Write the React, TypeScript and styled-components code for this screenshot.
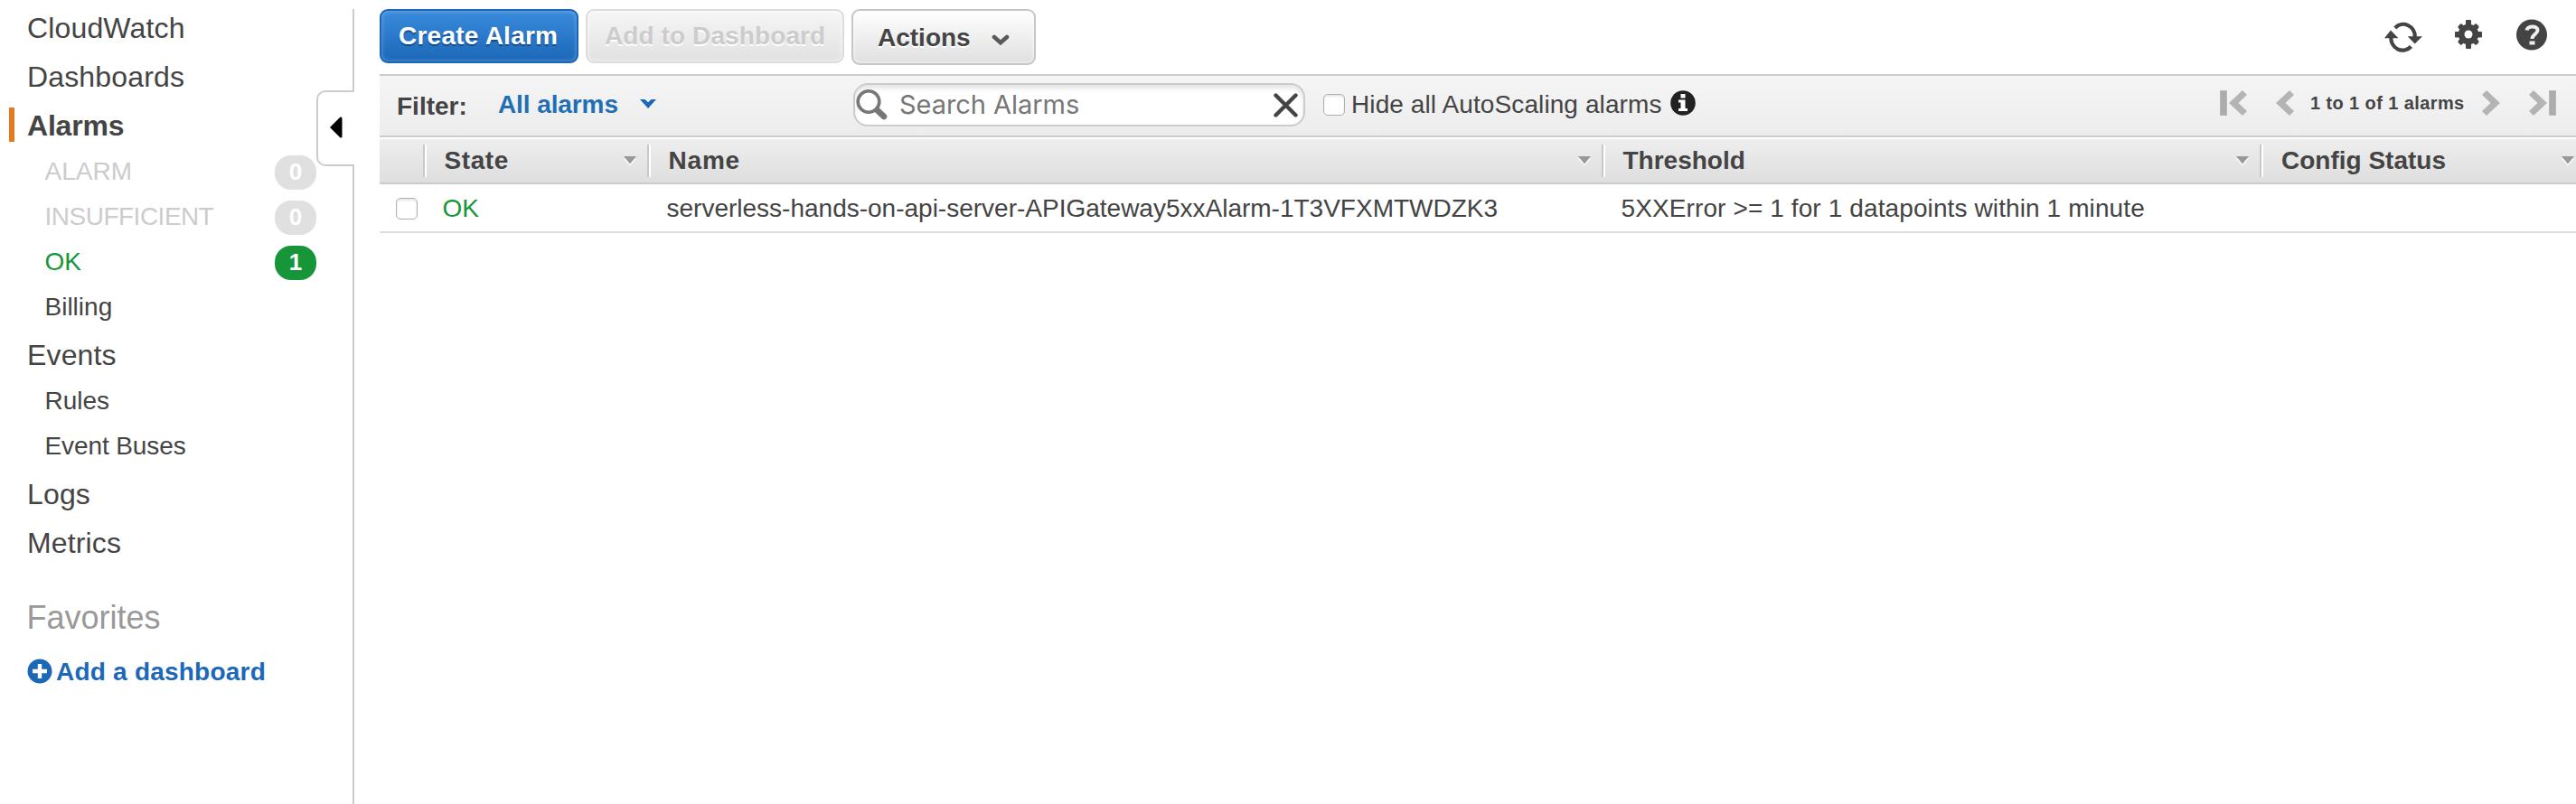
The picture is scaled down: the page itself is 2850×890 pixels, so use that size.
import React from "react";
import styled, { createGlobalStyle, css } from "styled-components";

const GlobalStyle = createGlobalStyle`
  * { box-sizing: border-box; }
  html, body { margin: 0; padding: 0; background: #fff; overflow: hidden; }
  body { font-family: "Liberation Sans", Arial, sans-serif; font-size: 28px; color: #444; }
`;

const Page = styled.div`
  display: flex;
  width: 2850px;
  height: 890px;
  overflow: hidden;
`;

const Sidebar = styled.nav`
  position: relative;
  flex: none;
  width: 392px;
  padding-top: 4px;
`;

const SidebarEdge = styled.div`
  position: absolute;
  top: 10px;
  right: 0;
  bottom: 0;
  width: 2px;
  background: #ccc;
`;

const CollapseTab = styled.button`
  position: absolute;
  top: 100px;
  right: 0;
  width: 42px;
  height: 84px;
  padding: 0 0 3px 13px;
  display: flex;
  align-items: center;
  background: #fff;
  border: 2px solid #ccc;
  border-right: none;
  border-radius: 10px 0 0 10px;
`;

const NavItem = styled.a<{ $active?: boolean }>`
  display: flex;
  align-items: center;
  height: 54px;
  padding-left: 30px;
  font-size: 32px;
  line-height: 54px;
  letter-spacing: 0.15px;
  ${(p) =>
    p.$active &&
    css`
      padding-left: 0;
      font-weight: bold;
      letter-spacing: -0.2px;
      &::before {
        content: "";
        width: 6px;
        height: 38px;
        margin: 0 14px 2px 10px;
        background: #e07b22;
      }
    `}
`;

const SubItem = styled.a<{ $color?: string; $spacing?: number }>`
  display: flex;
  align-items: center;
  justify-content: space-between;
  height: 50px;
  padding: 0 42px 0 49.5px;
  color: ${(p) => p.$color ?? "#444"};
  letter-spacing: ${(p) => p.$spacing ?? 0}px;
`;

const SubLabel = styled.span`
  line-height: 46px;
  padding-bottom: 3px;
`;

const Badge = styled.span<{ $color: string }>`
  width: 46px;
  height: 38px;
  border-radius: 18px;
  background: ${(p) => p.$color};
  color: #fff;
  font-size: 26px;
  font-weight: bold;
  line-height: 37px;
  text-align: center;
  letter-spacing: 0;
`;

const Favorites = styled.h2`
  margin: 35px 0 0 29.5px;
  font-size: 36px;
  font-weight: normal;
  line-height: 42px;
  color: #999;
`;

const AddDashboard = styled.a`
  display: flex;
  align-items: center;
  gap: 4px;
  margin: 22px 0 0 30px;
  height: 34px;
  font-weight: bold;
  line-height: 34px;
  letter-spacing: 0.22px;
  color: #1c68b8;
  svg { margin-bottom: 2px; }
`;

const Main = styled.main`
  flex: 1;
  min-width: 0;
  margin-left: 28px;
`;

const Toolbar = styled.header`
  display: flex;
  align-items: flex-start;
  gap: 8px;
  height: 82px;
  padding-top: 10px;
`;

const Button = styled.button<{ $kind: "primary" | "disabled" | "menu" }>`
  display: flex;
  align-items: center;
  height: 60px;
  padding: 0 0 1px 19px;
  border-radius: 9px;
  font: bold 28px "Liberation Sans", Arial, sans-serif;
  white-space: nowrap;
  ${(p) =>
    p.$kind === "primary" &&
    css`
      width: 220px;
      color: #fff;
      letter-spacing: 0.25px;
      border: 2px solid #1a66b8;
      background: linear-gradient(#3a8bdc, #1b67b8);
      box-shadow: inset 0 0 5px rgba(255, 255, 255, 0.35);
      text-shadow: 0 2px 1px rgba(0, 40, 100, 0.55);
    `}
  ${(p) =>
    p.$kind === "disabled" &&
    css`
      width: 286px;
      color: #ccc;
      letter-spacing: 0.1px;
      border: 2px solid #ddd;
      background: linear-gradient(#f6f6f6, #e1e1e1);
      box-shadow: inset 0 0 5px rgba(255, 255, 255, 0.8);
      text-shadow: 0 2px 0 #fff;
    `}
  ${(p) =>
    p.$kind === "menu" &&
    css`
      width: 204px;
      height: 62px;
      padding: 1px 27px 0 27px;
      justify-content: space-between;
      color: #444;
      border: 2px solid #c6c6c6;
      background: linear-gradient(#fff, #dfdfdf);
      box-shadow: inset 0 0 4px rgba(255, 255, 255, 0.9);
      text-shadow: 0 2px 0 #fff;
      svg { margin-top: 5px; }
    `}
`;

const ToolIcons = styled.div`
  display: flex;
  align-items: flex-start;
  margin-left: auto;
  padding: 11px 32px 0 0;
  svg:nth-child(1) { margin: 3px 36px 0 0; }
  svg:nth-child(2) { margin: 1px 38px 0 0; }
`;

const FilterBar = styled.section`
  display: flex;
  align-items: flex-start;
  height: 72px;
  padding-top: 8px;
  border-top: 2px solid #ccc;
  border-bottom: 2px solid #fff;
  background: linear-gradient(#f5f5f5, #ececec);
  box-shadow: inset 0 -2px 0 #ccc;
`;

const FilterLabel = styled.span`
  width: 131px;
  padding-left: 19px;
  font-weight: bold;
  line-height: 52px;
`;

const FilterValue = styled.button`
  display: flex;
  align-items: center;
  width: 393px;
  height: 48px;
  padding: 0;
  border: 0;
  background: none;
  font: bold 28px/48px "Liberation Sans", Arial, sans-serif;
  letter-spacing: -0.1px;
  color: #1f6fb5;
  svg { margin: 0 0 2px 23px; }
`;

const SearchBox = styled.div`
  display: flex;
  align-items: center;
  width: 500px;
  height: 48px;
  padding: 0 6px 0 1px;
  border: 2px solid #ccc;
  border-radius: 16px;
  background: #fff;
  box-shadow: inset 0 4px 6px -1px rgba(0, 0, 0, 0.13);
`;

const SearchText = styled.span`
  flex: 1;
  padding-left: 12px;
  font: 29px/44px Inter, sans-serif;
  letter-spacing: -0.05px;
  color: #777;
`;

const CheckBox = styled.span`
  display: block;
  flex: none;
  width: 24px;
  height: 24px;
  border: 1.5px solid #b0b0b0;
  border-radius: 5px;
  background: #fff;
  box-shadow: inset 0 2px 3px rgba(0, 0, 0, 0.1);
`;

const HideOption = styled.label`
  display: flex;
  align-items: center;
  height: 48px;
  margin-left: 20px;
  line-height: 48px;
  letter-spacing: 0.1px;
  span + span { margin: 0 9px 0 7px; }
  svg { margin-bottom: 4px; }
`;

const Pager = styled.div`
  display: flex;
  align-items: center;
  height: 44px;
  margin: 0 22px 0 auto;
  font-size: 20px;
  font-weight: bold;
  line-height: 46px;
  letter-spacing: 0.4px;
`;

const PagerText = styled.span`
  width: 190px;
  margin: 0 0 0 18px;
`;

const PagerGap = styled.span<{ $w: number }>`
  width: ${(p) => p.$w}px;
`;

const columns = "52px 248px 1056px 728px 1fr";

const HeaderRow = styled.div`
  display: grid;
  grid-template-columns: ${columns};
  height: 50px;
  border-bottom: 2px solid #ccc;
  background: linear-gradient(#eee, #dedede);
`;

const HeaderCell = styled.div<{ $spacing?: number; $last?: boolean }>`
  display: flex;
  align-items: center;
  justify-content: space-between;
  height: 36px;
  margin-top: 6px;
  padding: 0 ${(p) => (p.$last ? 2 : 14)}px 0 ${(p) => (p.$last ? 20 : 19.5)}px;
  font-weight: bold;
  line-height: 38px;
  letter-spacing: ${(p) => p.$spacing ?? 0}px;
  ${(p) =>
    !p.$last &&
    css`
      border-right: 2px solid #fff;
      box-shadow: inset -2px 0 0 #c8c8c8;
    `}
  svg { margin-top: 1px; }
`;

const Row = styled.div`
  display: grid;
  grid-template-columns: ${columns};
  align-items: center;
  height: 54px;
  border-bottom: 2px solid #ddd;
  line-height: 52px;
`;

const Cell = styled.div<{ $color?: string; $spacing?: number; $check?: boolean }>`
  padding: ${(p) => (p.$check ? "0 0 0 18px" : "1px 0 0 17.5px")};
  color: ${(p) => p.$color ?? "#444"};
  letter-spacing: ${(p) => p.$spacing ?? 0}px;
  white-space: nowrap;
`;

const SortArrow = () => (
  <svg width="14" height="11" viewBox="0 0 14 11">
    <path d="M0 2.5h14l-7 8z" fill="#fff" />
    <path d="M0 0h14L7 8.500z" fill="#999" />
  </svg>
);

const Caret = ({ color }: { color: string }) => (
  <svg width="20" height="13" viewBox="0 0 20 13">
    <path d="M3 3l7 6.2L17 3" fill="none" stroke={color} strokeWidth="4.6" strokeLinecap="round" />
  </svg>
);

const FilterCaret = () => (
  <svg width="20" height="12" viewBox="0 0 20 12">
    <path d="M1 1h5.500L10 4.300L13.500 1H19L10 11z" fill="#1c68b8" />
  </svg>
);

const RefreshIcon = () => (
  <svg width="42" height="34" viewBox="0 0 42 34">
    <g fill="none" stroke="#444" strokeWidth="4.2">
      <path d="M11.800 7A12.800 13.300 0 0 1 33.800 17" />
      <path d="M29.500 27.500A12.800 13.300 0 0 1 7.500 16.500" />
    </g>
    <path d="M25.700 16.300H42L33.700 24.600z" fill="#444" />
    <path d="M0 18.300h15.500L7 9.500z" fill="#444" />
  </svg>
);

const GearIcon = () => (
  <svg width="30" height="32" viewBox="0 0 30 32">
    <g fill="#444">
      <circle cx="15" cy="16" r="11.200" />
      <rect x="12" y="0" width="6" height="32" rx="1" />
      <rect x="0" y="13" width="30" height="6.500" rx="1" />
      <rect x="12" y="1.500" width="6" height="29" rx="2" transform="rotate(45 15 16)" />
      <rect x="12" y="1.500" width="6" height="29" rx="2" transform="rotate(-45 15 16)" />
    </g>
    <circle cx="15" cy="16" r="4.500" fill="#fff" />
  </svg>
);

const HelpIcon = () => (
  <svg width="34" height="35" viewBox="0 0 34 35">
    <circle cx="17" cy="17.500" r="17" fill="#444" />
    <path d="M11.500 12.500c1-5.500 12-5.500 12 0 0 4-6 4.500-6 9.500" fill="none" stroke="#eee" strokeWidth="4" />
    <rect x="14.500" y="24.500" width="6" height="4" fill="#eee" />
  </svg>
);

const SearchIcon = () => (
  <svg width="36" height="36" viewBox="0 0 36 36">
    <circle cx="14" cy="14.500" r="11.800" fill="none" stroke="#777" strokeWidth="3.600" />
    <path d="M23.500 24l7.500 7" stroke="#777" strokeWidth="6.500" strokeLinecap="round" />
  </svg>
);

const CloseIcon = () => (
  <svg width="27" height="27" viewBox="0 0 27 27">
    <path d="M2.500 2.500l22 22M24.500 2.500L2.500 24.500" stroke="#444" strokeWidth="4.400" strokeLinecap="round" />
  </svg>
);

const InfoIcon = () => (
  <svg width="28" height="28" viewBox="0 0 28 28">
    <circle cx="14" cy="14" r="13.800" fill="#222" />
    <path d="M11.500 4h5v4.500h-5zM9 10.500h7.500v9.500h2.500V23h-10v-3H11.500v-6.500H9z" fill="#fff" />
  </svg>
);

const PlusIcon = () => (
  <svg width="28" height="28" viewBox="0 0 28 28">
    <circle cx="14" cy="14" r="13.500" fill="#1c68b8" />
    <path d="M14 6v16M6 14h16" stroke="#fff" strokeWidth="4.400" />
  </svg>
);

const Chevron = ({ right }: { right?: boolean }) => (
  <svg width="20" height="28" viewBox="0 0 20 28">
    <path
      d={right ? "M0 5L5 0L20 14L5 28L0 23L9.500 14z" : "M20 5L15 0L0 14L15 28L20 23L10.500 14z"}
      fill="#b4b4b4"
    />
  </svg>
);

const Bar = styled.i`
  width: 8px;
  height: 28px;
  background: #acacac;
  border: 1px solid #b9b9b9;
`;

export default function App() {
  return (
    <>
      <GlobalStyle />
      <Page>
        <Sidebar>
          <NavItem>CloudWatch</NavItem>
          <NavItem>Dashboards</NavItem>
          <NavItem $active>Alarms</NavItem>
          <SubItem $color="#ccc"><SubLabel>ALARM</SubLabel><Badge $color="#e0e0e0">0</Badge></SubItem>
          <SubItem $color="#ccc" $spacing={-0.5}><SubLabel>INSUFFICIENT</SubLabel><Badge $color="#e0e0e0">0</Badge></SubItem>
          <SubItem $color="#179639"><SubLabel>OK</SubLabel><Badge $color="#179639">1</Badge></SubItem>
          <SubItem><SubLabel>Billing</SubLabel></SubItem>
          <NavItem>Events</NavItem>
          <SubItem><SubLabel>Rules</SubLabel></SubItem>
          <SubItem $spacing={-0.1}><SubLabel>Event Buses</SubLabel></SubItem>
          <NavItem>Logs</NavItem>
          <NavItem>Metrics</NavItem>
          <Favorites>Favorites</Favorites>
          <AddDashboard><PlusIcon />Add a dashboard</AddDashboard>
          <SidebarEdge />
          <CollapseTab aria-label="Collapse">
            <svg width="14" height="24" viewBox="0 0 14 24">
              <path d="M0 12L11.500 0.500Q13.500 0 13.500 2v20q0 2-2 1.500z" fill="#000" />
            </svg>
          </CollapseTab>
        </Sidebar>
        <Main>
          <Toolbar>
            <Button $kind="primary">Create Alarm</Button>
            <Button $kind="disabled">Add to Dashboard</Button>
            <Button $kind="menu">Actions<Caret color="#5a5a5a" /></Button>
            <ToolIcons><RefreshIcon /><GearIcon /><HelpIcon /></ToolIcons>
          </Toolbar>
          <FilterBar>
            <FilterLabel>Filter:</FilterLabel>
            <FilterValue>All alarms<FilterCaret /></FilterValue>
            <SearchBox><SearchIcon /><SearchText>Search Alarms</SearchText><CloseIcon /></SearchBox>
            <HideOption><CheckBox /><span>Hide all AutoScaling alarms</span><InfoIcon /></HideOption>
            <Pager>
              <Bar /><PagerGap $w={2} /><Chevron /><PagerGap $w={32} /><Chevron />
              <PagerText>1 to 1 of 1 alarms</PagerText>
              <Chevron right /><PagerGap $w={32} /><Chevron right /><PagerGap $w={2} /><Bar />
            </Pager>
          </FilterBar>
          <HeaderRow>
            <HeaderCell />
            <HeaderCell $spacing={0.6}>State<SortArrow /></HeaderCell>
            <HeaderCell $spacing={0.8}>Name<SortArrow /></HeaderCell>
            <HeaderCell>Threshold<SortArrow /></HeaderCell>
            <HeaderCell $last>Config Status<SortArrow /></HeaderCell>
          </HeaderRow>
          <Row>
            <Cell $check><CheckBox /></Cell>
            <Cell $color="#179639">OK</Cell>
            <Cell>serverless-hands-on-api-server-APIGateway5xxAlarm-1T3VFXMTWDZK3</Cell>
            <Cell $spacing={0.11}>5XXError &gt;= 1 for 1 datapoints within 1 minute</Cell>
            <Cell />
          </Row>
        </Main>
      </Page>
    </>
  );
}
